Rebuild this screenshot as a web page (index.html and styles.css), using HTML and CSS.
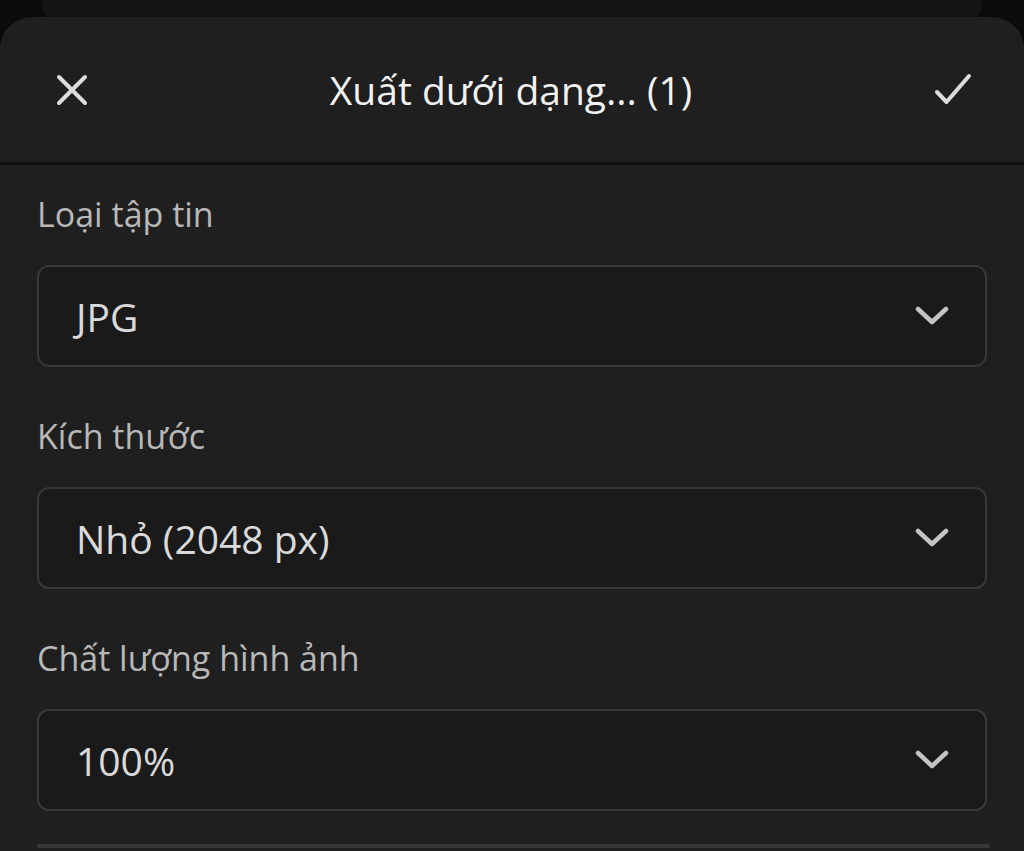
FILE: index.html
```html
<!DOCTYPE html>
<html lang="vi">
<head>
    <meta charset="UTF-8"/>
    <meta name="viewport" content="width=device-width, initial-scale=1.0"/>
    <title>Xuất dưới dạng</title>
    <link rel="stylesheet" href="styles.css">
</head>
<body>
<div class="behind"></div>
<div class="sheet">
    <div class="header">
        <button class="icon-btn" aria-label="Đóng">
            <svg width="32" height="32" viewBox="0 0 32 32">
                <path d="M3 3 L29 29 M29 3 L3 29" stroke="#dcdcdc" stroke-width="4" stroke-linecap="round" fill="none"/>
            </svg>
        </button>
        <h1 class="title">Xuất dưới dạng... (1)</h1>
        <button class="icon-btn" aria-label="Xong">
            <svg width="38" height="34" viewBox="0 0 38 34">
                <path d="M3 19 L12.5 29 L35 3" stroke="#dcdcdc" stroke-width="4" stroke-linecap="round" stroke-linejoin="round" fill="none"/>
            </svg>
        </button>
    </div>
    <div class="content">
        <div class="field">
            <p class="label">Loại tập tin</p>
            <div class="select">
                <span class="value">JPG</span>
                <svg class="chevron" width="34" height="20" viewBox="0 0 34 20">
                    <path d="M3 3 L17 16 L31 3" stroke="#c4c4c4" stroke-width="4.5" stroke-linecap="round" stroke-linejoin="round" fill="none"/>
                </svg>
            </div>
        </div>
        <div class="field">
            <p class="label">Kích thước</p>
            <div class="select">
                <span class="value">Nhỏ (2048 px)</span>
                <svg class="chevron" width="34" height="20" viewBox="0 0 34 20">
                    <path d="M3 3 L17 16 L31 3" stroke="#c4c4c4" stroke-width="4.5" stroke-linecap="round" stroke-linejoin="round" fill="none"/>
                </svg>
            </div>
        </div>
        <div class="field">
            <p class="label">Chất lượng hình ảnh</p>
            <div class="select">
                <span class="value">100%</span>
                <svg class="chevron" width="34" height="20" viewBox="0 0 34 20">
                    <path d="M3 3 L17 16 L31 3" stroke="#c4c4c4" stroke-width="4.5" stroke-linecap="round" stroke-linejoin="round" fill="none"/>
                </svg>
            </div>
        </div>
        <div class="rule"></div>
    </div>
</div>
</body>
</html>
```

FILE: styles.css
```css
* {
    margin: 0;
    padding: 0;
    box-sizing: border-box;
}

body {
    height: 100vh;
    background-color: #0b0b0b;
    font-family: 'Open Sans', 'Noto Sans', sans-serif;
    overflow: hidden;
}

/* card peeking out behind the sheet */
.behind {
    height: 47px;
    margin: -20px 42px 0 42px;
    background-color: #141414;
    border-radius: 36px;
}

.sheet {
    margin-top: -10px;
    height: calc(100vh - 17px);
    overflow: hidden;
    background-color: #1f1f1f;
    border-radius: 32px 32px 0 0;
}

.header {
    height: 148px;
    display: flex;
    align-items: center;
    justify-content: space-between;
    padding: 0 52px 0 56px;
    border-bottom: 3px solid #111111;
}

.icon-btn {
    background: none;
    border: none;
    display: flex;
}

.title {
    font-size: 39px;
    font-weight: 400;
    color: #f2f2f2;
}

.content {
    padding: 29px 37px 0 37px;
}

.field {
    margin-bottom: 49px;
}

.label {
    font-size: 34px;
    line-height: 40px;
    color: #b8b8b8;
    margin-bottom: 31px;
}

.select {
    height: 102px;
    display: flex;
    align-items: center;
    justify-content: space-between;
    padding: 0 36px 0 37px;
    background-color: #1a1a1a;
    border: 2px solid #383838;
    border-radius: 12px;
}

.value {
    font-size: 39px;
    color: #dadada;
}

.rule {
    height: 4px;
    margin-top: -16px;
    margin-right: -3px;
    background-color: #383838;
    border-radius: 2px;
}
```
